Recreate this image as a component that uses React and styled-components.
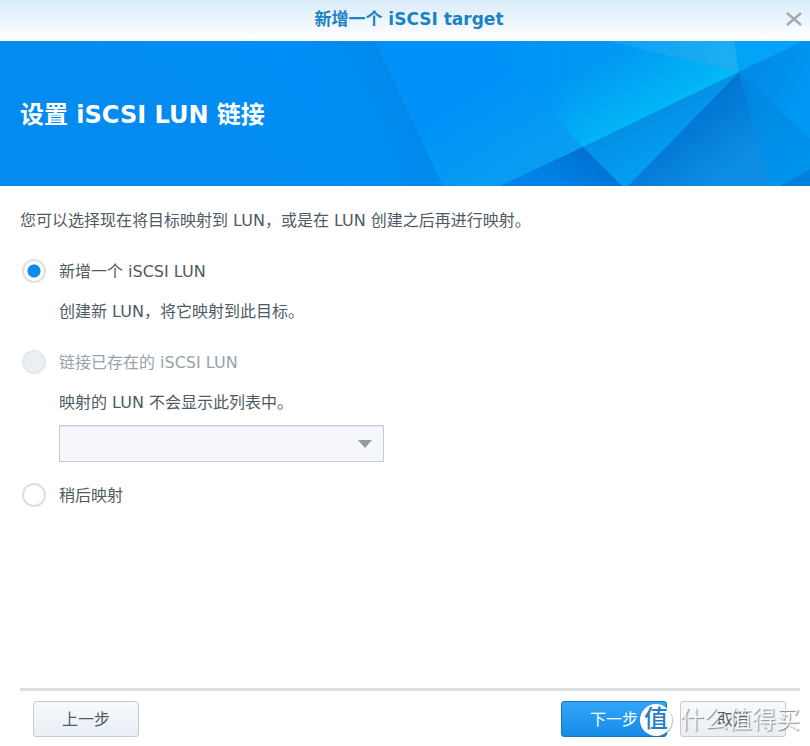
import React, { useState } from 'react'
import styled, { createGlobalStyle, css } from 'styled-components'

const GlobalStyle = createGlobalStyle`
  * {
    box-sizing: border-box;
  }

  body {
    margin: 0;
    background: #fff;
    color: #4f5a63;
    font: 16px/22px 'DejaVu Sans', 'Noto Sans CJK SC', sans-serif;
  }

  button, input, select {
    margin: 0;
    font: inherit;
  }
`

const Dialog = styled.div`
  display: flex;
  flex-direction: column;
  min-height: 100vh;
`

const TitleBar = styled.header`
  display: grid;
  grid-template-columns: 40px 1fr 32px;
  align-items: center;
  height: 41px;
  padding-bottom: 4px;
  background: linear-gradient(#d9ebf8, #fdfeff 90%);
`

const Title = styled.h1`
  grid-column: 2;
  margin: 0;
  color: #1c82c6;
  font-size: 17px;
  font-weight: bold;
  line-height: 24px;
  text-align: center;
`

const CloseButton = styled.button`
  display: grid;
  place-items: center;
  height: 32px;
  padding: 0;
  border: 0;
  background: none;
  cursor: pointer;
`

const Banner = styled.div`
  display: grid;
  height: 145px;
  background: #038bf0;
  overflow: hidden;

  > * {
    grid-area: 1 / 1;
  }
`

const BannerArt = styled.svg`
  display: block;
  width: 100%;
  height: 145px;
`

const BannerTitle = styled.h2`
  z-index: 1;
  align-self: center;
  margin: 0;
  padding: 2px 20px 0;
  color: #fff;
  font-size: 24px;
  font-weight: bold;
  line-height: 32px;
`

const Content = styled.form`
  flex: 1;
  padding: 22px 20px;
`

const Text = styled.p`
  margin: 0;
  padding-top: 2px;
`

const Options = styled.div`
  display: grid;
  gap: 27px;
  margin-top: 27px;
`

const Option = styled.div`
  display: grid;
  grid-template-columns: 24px 1fr;
  column-gap: 13px;
  row-gap: 16px;
  align-items: center;
  padding-left: 2px;
`

const Radio = styled.input`
  appearance: none;
  width: 24px;
  height: 24px;
  border: 2px solid #dcdfe1;
  border-radius: 50%;
  background: #fff;

  &:checked {
    border-color: #e2dfdc;
    background: radial-gradient(circle, #0a8bf0 6px, #fff 7px);
  }

  &:disabled {
    border-color: #e2e8ec;
    background: #e9eff3;
  }
`

const OptionLabel = styled.label`
  justify-self: start;
  padding-top: 2px;
  color: ${props => (props.$muted ? '#98a2ab' : 'inherit')};
`

const Details = styled.div`
  grid-column: 2;
  display: grid;
  gap: 11px;
`

const SelectBox = styled.div`
  display: grid;
  width: 325px;
  max-width: 100%;
  margin-bottom: -6px;
  align-items: center;

  > * {
    grid-area: 1 / 1;
  }

  svg {
    justify-self: end;
    margin-right: 12px;
    pointer-events: none;
  }
`

const Select = styled.select`
  appearance: none;
  width: 100%;
  height: 37px;
  padding: 0 32px 0 10px;
  border: 1px solid #c3cdd6;
  border-radius: 0;
  background: #f5f7fa;
  box-shadow: inset 0 1px 1px #dfe4ea;
  opacity: 1;
`

const Footer = styled.footer`
  position: relative;
  display: flex;
  gap: 13px;
  margin: 0 10px 0 20px;
  padding: 10px 14px 9px 13px;
  border-top: 3px solid #dcdfe1;
`

const Button = styled.button`
  width: 106px;
  height: 36px;
  padding: 2px 0 0;
  border: 1px solid #c3ccd6;
  border-radius: 3px;
  background: linear-gradient(#f6fafd, #e8eef4);
  color: #4f5a63;
  cursor: pointer;

  &:first-child {
    margin-right: auto;
  }

  ${props =>
    props.$primary &&
    css`
      border-color: #1776bd;
      background: linear-gradient(#32a6f8, #168be8);
      color: #fff;
    `}
`

const Watermark = styled.div`
  position: absolute;
  top: 13px;
  right: 0;
  display: flex;
  align-items: center;
  gap: 8px;
  color: rgba(250, 251, 252, 0.9);
  font-size: 24px;
  line-height: 32px;
  text-shadow: 1px 1px 1px rgba(110, 116, 122, 0.8);
  white-space: nowrap;
  pointer-events: none;
`

const Badge = styled.span`
  width: 32px;
  height: 32px;
  border-radius: 50%;
  background: #fff;
  box-shadow: 1px 1px 1px rgba(90, 100, 110, 0.4);
  color: #267fc5;
  font-weight: 500;
  line-height: 30px;
  text-align: center;
  text-shadow: none;
`

const Gradient = ({ id, from, to, ...coords }) => (
  <linearGradient id={id} gradientUnits='userSpaceOnUse' {...coords}>
    <stop offset='0' stopColor={from} />
    <stop offset='1' stopColor={to} />
  </linearGradient>
)

// faceted blue backdrop, anchored to the right edge of the banner
const Facets = () => (
  <BannerArt viewBox='0 0 810 145' preserveAspectRatio='xMaxYMid slice' aria-hidden='true'>
    <defs>
      <Gradient id='base' x1='260' y1='145' x2='330' y2='50' from='#038bf0' to='#008ff7' />
      <Gradient id='left' x1='336' y1='107' x2='409' y2='72' from='#0089eb00' to='#0089eb' />
      <Gradient id='glow' x1='598' y1='20' x2='636' y2='88' from='#0098f3' to='#03b9f6' />
      <Gradient id='fade' x1='495' y1='10' x2='580' y2='10' from='#0092f8' to='#0092f800' />
      <Gradient id='mid' x1='475' y1='50' x2='535' y2='145' from='#0092f8' to='#0a9ff0' />
      <Gradient id='top' x1='630' y1='0' x2='735' y2='20' from='#12a2f7' to='#1cafef' />
      <Gradient id='wedge' x1='640' y1='60' x2='665' y2='110' from='#058be2' to='#049cef' />
      <Gradient id='dark' x1='665' y1='85' x2='710' y2='145' from='#0074d1' to='#0d8de4' />
      <Gradient id='corner' x1='583' y1='106' x2='560' y2='145' from='#0070d2' to='#0082e6' />
      <Gradient id='slice' x1='735' y1='50' x2='790' y2='145' from='#0086e0' to='#0095ed' />
      <Gradient id='right' x1='745' y1='40' x2='810' y2='70' from='#028ae6' to='#009af5' />
    </defs>
    <rect width='810' height='145' fill='url(#base)' />
    <path d='M240 0H375L443 145H240Z' fill='url(#left)' />
    <path d='M375 0H540L583 106 500 145H443Z' fill='url(#mid)' />
    <path d='M485 0H612L739 31 583 106Z' fill='url(#glow)' />
    <path d='M485 0H612L583 106Z' fill='url(#fade)' />
    <path d='M608 0H735L739 31Z' fill='url(#top)' />
    <path d='M734 0H804L739 31Z' fill='#02a4f8' />
    <path d='M804 0H810V98L739 31Z' fill='url(#right)' />
    <path d='M739 31L810 98V145H770Z' fill='url(#slice)' />
    <path d='M780 145L810 128V145Z' fill='#0081dd' />
    <path d='M739 31L770 145H628Z' fill='url(#dark)' />
    <path d='M739 31L628 145H622L583 106Z' fill='url(#wedge)' />
    <path d='M583 106L622 145H500Z' fill='url(#corner)' />
  </BannerArt>
)

const App = () => {
  const [mapping, setMapping] = useState('create')
  const handleChange = e => setMapping(e.target.value)

  return (
    <Dialog>
      <GlobalStyle />
      <TitleBar>
        <Title>新增一个 iSCSI target</Title>
        <CloseButton type='button' aria-label='关闭'>
          <svg width='16' height='14' viewBox='0 0 16 14'>
            <path d='M1 1L15 13M15 1L1 13' stroke='#a3abb1' strokeWidth='2.4' />
          </svg>
        </CloseButton>
      </TitleBar>
      <Banner>
        <Facets />
        <BannerTitle>设置 iSCSI LUN 链接</BannerTitle>
      </Banner>
      <Content id='mapping-form' onSubmit={e => e.preventDefault()}>
        <Text>您可以选择现在将目标映射到 LUN，或是在 LUN 创建之后再进行映射。</Text>
        <Options>
          <Option>
            <Radio
              type='radio'
              id='create'
              name='mapping'
              value='create'
              checked={mapping === 'create'}
              onChange={handleChange}
            />
            <OptionLabel htmlFor='create'>新增一个 iSCSI LUN</OptionLabel>
            <Details>
              <Text>创建新 LUN，将它映射到此目标。</Text>
            </Details>
          </Option>
          <Option>
            <Radio type='radio' id='existing' name='mapping' value='existing' disabled />
            <OptionLabel htmlFor='existing' $muted>
              链接已存在的 iSCSI LUN
            </OptionLabel>
            <Details>
              <Text as='label' htmlFor='lun'>
                映射的 LUN 不会显示此列表中。
              </Text>
              <SelectBox>
                <Select id='lun' disabled />
                <svg width='14' height='8' viewBox='0 0 14 8'>
                  <path d='M0 0H14L7 8Z' fill='#8f9ba8' />
                </svg>
              </SelectBox>
            </Details>
          </Option>
          <Option>
            <Radio
              type='radio'
              id='later'
              name='mapping'
              value='later'
              checked={mapping === 'later'}
              onChange={handleChange}
            />
            <OptionLabel htmlFor='later'>稍后映射</OptionLabel>
          </Option>
        </Options>
      </Content>
      <Footer>
        <Button type='button'>上一步</Button>
        <Button type='submit' form='mapping-form' $primary>
          下一步
        </Button>
        <Button type='button'>取消</Button>
        <Watermark>
          <Badge>值</Badge>
          什么值得买
        </Watermark>
      </Footer>
    </Dialog>
  )
}

export default App
